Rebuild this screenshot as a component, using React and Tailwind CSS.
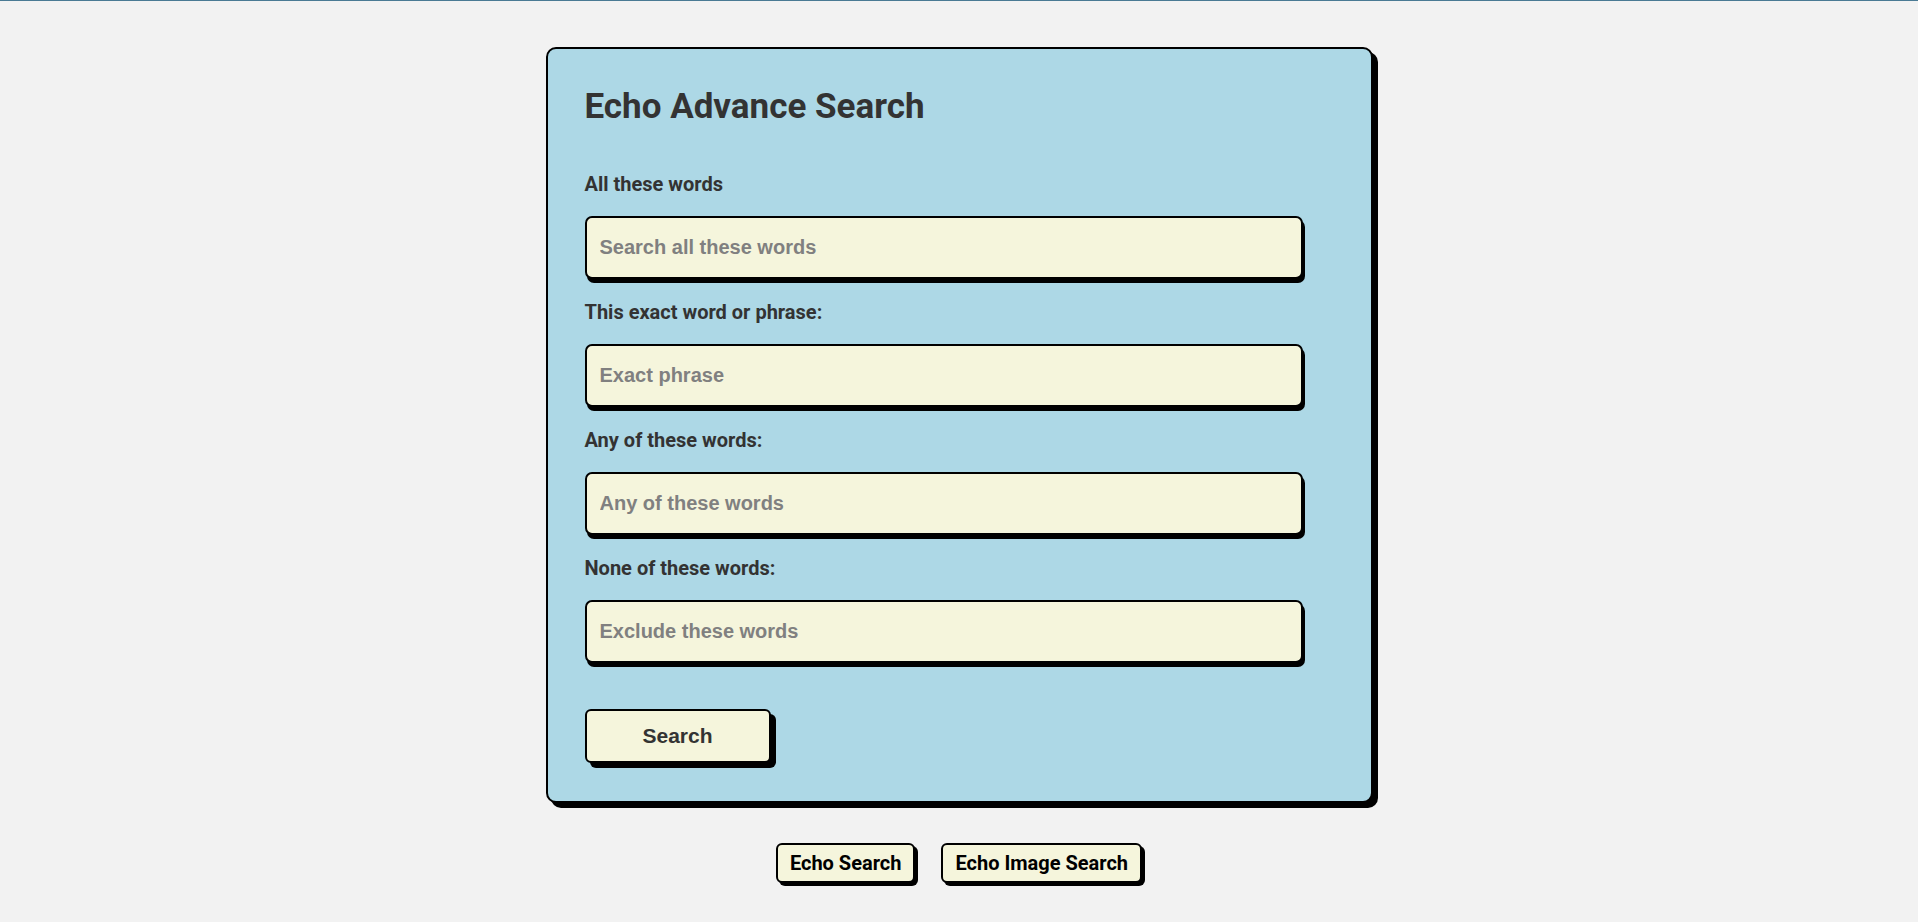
import React from "react";

const fields = [
  { label: "All these words", placeholder: "Search all these words" },
  { label: "This exact word or phrase:", placeholder: "Exact phrase" },
  { label: "Any of these words:", placeholder: "Any of these words" },
  { label: "None of these words:", placeholder: "Exclude these words" },
];

export default function App() {
  return (
    <div className="min-h-screen bg-[#f2f2f2] border-t border-[#4a7a94] font-['Roboto',sans-serif]">
      <div className="flex flex-col items-center pt-[46px]">
        <div className="w-[827px] bg-[#add8e6] border-2 border-black rounded-[10px] shadow-[5px_5px_0_#000] pl-[37px] pt-[37px] pb-[38px] text-[#333]">
          <h1 className="text-[35px] leading-[41px] font-bold">Echo Advance Search</h1>
          <div className="mt-[46px] flex flex-col gap-[22px]">
            {fields.map((f) => (
              <div key={f.label} className="flex flex-col">
                <label className="text-[20px] leading-[23px] font-bold">{f.label}</label>
                <input
                  type="text"
                  placeholder={f.placeholder}
                  className="mt-[20px] w-[718px] h-[63px] border-2 border-black rounded-[7px] bg-[#f5f5dc] shadow-[2px_4px_0_#000] px-[13px] font-['Liberation_Sans',Arial,sans-serif] font-bold text-[20px] text-[#333] placeholder:text-[#808080] outline-none"
                />
              </div>
            ))}
          </div>
          <button className="mt-[46px] w-[186px] h-[54px] border-2 border-black rounded-[6px] bg-[#f5f5dc] shadow-[5px_5px_0_#000] font-['Liberation_Sans',Arial,sans-serif] font-bold text-[21px] text-[#333]">
            Search
          </button>
        </div>
        <div className="mt-[40px] flex gap-[26px]">
          <button className="h-[40px] px-[12px] border-2 border-black rounded-[6px] bg-[#f5f5dc] shadow-[3px_3px_0_#000] font-bold text-[20px] text-black">
            Echo Search
          </button>
          <button className="h-[40px] px-[12px] border-2 border-black rounded-[6px] bg-[#f5f5dc] shadow-[3px_3px_0_#000] font-bold text-[20px] text-black">
            Echo Image Search
          </button>
        </div>
      </div>
    </div>
  );
}
